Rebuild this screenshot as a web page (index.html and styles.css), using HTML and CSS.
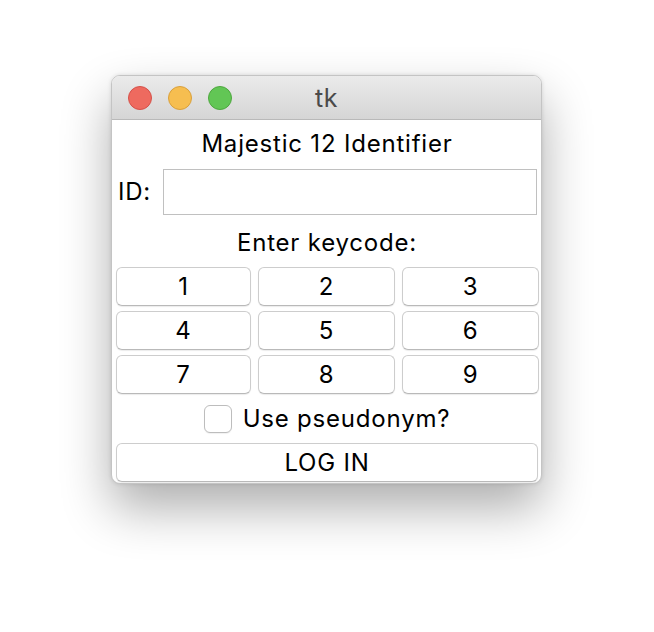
FILE: index.html
```html
<!DOCTYPE html>
<html>
<head>
<meta charset="utf-8">
<link rel="stylesheet" href="styles.css">
</head>
<body>
<div class="window">
  <div class="titlebar">
    <div class="lights">
      <span class="light red"></span>
      <span class="light yellow"></span>
      <span class="light green"></span>
    </div>
    <div class="title">tk</div>
  </div>
  <div class="content">
    <div class="heading">Majestic 12 Identifier</div>
    <div class="idrow">
      <span class="idlabel">ID:</span>
      <div class="entry"></div>
    </div>
    <div class="prompt">Enter keycode:</div>
    <div class="keypad">
      <div class="btn">1</div>
      <div class="btn">2</div>
      <div class="btn">3</div>
      <div class="btn">4</div>
      <div class="btn">5</div>
      <div class="btn">6</div>
      <div class="btn">7</div>
      <div class="btn">8</div>
      <div class="btn">9</div>
    </div>
    <div class="checkrow">
      <span class="checkbox"></span>
      <span class="checklabel">Use pseudonym?</span>
    </div>
    <div class="btn login">LOG IN</div>
  </div>
</div>
</body>
</html>
```
FILE: styles.css
```css
html, body {
  margin: 0;
  padding: 0;
  background: #ffffff;
}
body {
  width: 654px;
  height: 632px;
  padding-top: 75px;
  box-sizing: border-box;
  font-family: Inter, "Liberation Sans", sans-serif;
  color: #000;
}
.window {
  width: 431px;
  height: 409px;
  margin-left: 111px;
  box-sizing: border-box;
  border: 1px solid #c4c4c4;
  border-radius: 9px;
  background: #ffffff;
  box-shadow: 0 24px 50px rgba(0,0,0,0.32), 0 0 4px rgba(0,0,0,0.12);
  overflow: hidden;
  display: flex;
  flex-direction: column;
}
.titlebar {
  height: 44px;
  flex: none;
  box-sizing: border-box;
  background: linear-gradient(#ebebeb, #d5d5d5);
  border-bottom: 1px solid #b9b9b9;
  position: relative;
  display: flex;
  align-items: center;
}
.lights {
  display: flex;
  gap: 16px;
  padding-left: 16px;
}
.light {
  width: 24px;
  height: 24px;
  border-radius: 50%;
  box-sizing: border-box;
}
.red { background: #ee6a5f; border: 1px solid #d5514a; }
.yellow { background: #f6be50; border: 1px solid #d9a03c; }
.green { background: #62c655; border: 1px solid #4ea73f; }
.title {
  position: absolute;
  left: 0;
  right: 0;
  top: 0;
  line-height: 44px;
  text-align: center;
  font-size: 25px;
  letter-spacing: 0.5px;
  color: #4a4a4a;
}
.content {
  padding: 0 3px 0 4px;
  display: flex;
  flex-direction: column;
  font-size: 24px;
  letter-spacing: 0.8px;
}
.heading {
  height: 48px;
  line-height: 48px;
  text-align: center;
}
.idrow {
  display: flex;
  align-items: center;
  height: 47px;
}
.idlabel {
  width: 45px;
  padding-left: 2px;
}
.entry {
  flex: 1;
  height: 46px;
  box-sizing: border-box;
  border: 1px solid #c0c0c0;
  margin-right: 1px;
}
.prompt {
  height: 52px;
  line-height: 56px;
  text-align: center;
}
.keypad {
  display: grid;
  grid-template-columns: 135px 137px 137px;
  column-gap: 7px;
  row-gap: 5px;
}
.btn {
  height: 39px;
  box-sizing: border-box;
  border: 1px solid #cdcdcd;
  border-bottom-color: #b9b9b9;
  border-radius: 6px;
  background: #ffffff;
  box-shadow: 0 1px 1px rgba(0,0,0,0.08);
  display: flex;
  align-items: center;
  justify-content: center;
}
.checkrow {
  height: 49px;
  display: flex;
  align-items: center;
  justify-content: center;
  gap: 11px;
}
.checkbox {
  width: 28px;
  height: 28px;
  box-sizing: border-box;
  border: 1px solid #bdbdbd;
  border-radius: 6px;
  background: #fff;
  box-shadow: 0 1px 1px rgba(0,0,0,0.06);
}
.login {
  margin-right: 0;
}
```
